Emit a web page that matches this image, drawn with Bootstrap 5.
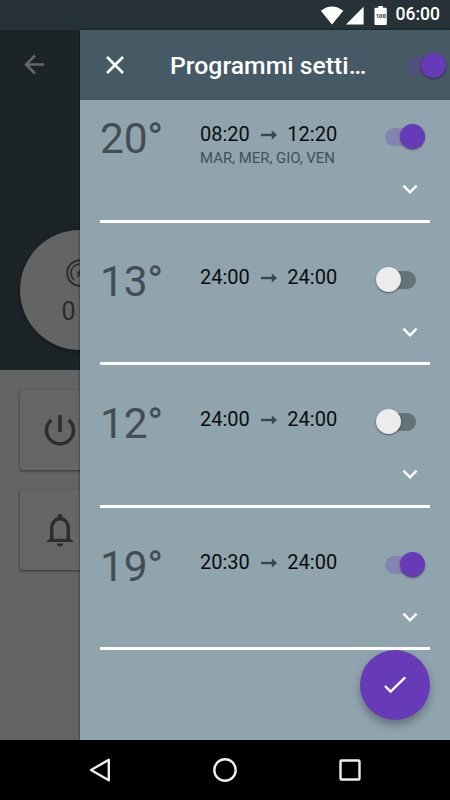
<!DOCTYPE html>
<html lang="it">
<head>
<meta charset="utf-8">
<meta name="viewport" content="width=device-width, initial-scale=1">
<title>Programmi settimanali</title>
<link href="https://cdn.jsdelivr.net/npm/bootstrap@5.3.0/dist/css/bootstrap.min.css" rel="stylesheet">
<style>
body{width:450px;height:800px;font-family:Roboto,sans-serif;line-height:1;background:#000}
svg{display:block;flex:none}
.status{height:30px;background:#263238;padding-right:10px;font-size:17.5px;font-weight:500}
.battery-wrap{margin:0 8px 0 9px}
.page-behind{width:80px;background:#646464;flex:none}
.hero{height:340px;background:#1d2428}
.back-icon{margin:23px 0 0 22px}
.dial{width:120px;height:120px;margin:153px 0 0 20px;background:#646464;box-shadow:0 2px 5px rgba(0,0,0,.3);color:#2b2b2b}
.dial-value{font-size:25px;line-height:30px;margin-left:41.5px;padding-top:1px}
.dial-unit{font-size:9px;color:#3f3f3f;vertical-align:2px}
.tile{width:120px;height:80px;margin:20px 0 0 20px;background:#666;border-radius:3px;box-shadow:0 1px 3px rgba(0,0,0,.5);padding-left:20px}
.drawer{background:#90a4ae;box-shadow:0 0 2px rgba(0,0,0,.7)}
.drawer-head{height:70px;background:#455a64;padding:0 4px 0 25px}
.drawer-title{font-size:24.8px;font-weight:500;margin-left:45px;width:200px;line-height:30px;padding-top:2px}
.programs{padding:0 20px;gap:20px}
.program{height:122.5px;border-bottom:3px solid #fff}
.program-main{height:84px}
.temp{width:100px;font-size:42.5px;line-height:50px;padding-top:14px;color:#424e54;letter-spacing:-.2px}
.hours{font-size:20px;line-height:24px;padding-top:22px;color:#0a0c0d}
.hours svg{margin:2px 10.5px 0 11px}
.days{font-size:15px;line-height:20px;margin-top:2px;color:#445057;letter-spacing:-.05px}
.toggle{width:40px;height:25px;flex:none}
.toggle::before{content:"";position:absolute;top:4px;width:30px;height:18px;border-radius:9px}
.toggle::after{content:"";position:absolute;top:0;width:25px;height:25px;border-radius:50%;box-shadow:0 1px 2px rgba(0,0,0,.45)}
.toggle.on::before{left:0;background:rgba(103,58,183,.3)}
.toggle.on::after{right:0;background:#673ab7}
.toggle.off::before{right:0;background:#647279}
.toggle.off::after{left:0;background:#ececec}
.program .toggle.on{margin:24px 5px 0 0}
.program .toggle.off{margin:24px 14px 0 0}
.expand{padding-right:12px}
.confirm{width:70px;height:70px;right:20px;bottom:20px;background:#673ab7;box-shadow:0 5px 9px rgba(0,0,0,.3)}
.confirm:hover{background:#5e35b1}
.sysnav{height:60px;padding:0 82px;background:#000}
.main-area{height:710px}
</style>
<script src="https://cdn.jsdelivr.net/npm/bootstrap@5.3.0/dist/js/bootstrap.bundle.min.js"></script>
</head>
<body class="m-0 overflow-hidden">
<header class="status d-flex align-items-center justify-content-end text-white">
  <svg width="45" height="19" viewBox="0 0 45 19" fill="#fff"><path d="M.8 4.8Q12-4 23.3 4.8L12 18.6z"/><path d="M26 18.6H43.6V.8z"/></svg>
  <div class="battery-wrap"><svg width="14" height="19" viewBox="0 0 14 19"><path d="M4.3 0h4.6v1.8h2.8q1.1 0 1.1 1.1V18q0 1-1.1 1H1.6Q.5 19 .5 18V2.9q0-1.1 1.1-1.1h2.7z" fill="#fff"/><text x="6.8" y="11.7" text-anchor="middle" font-family="Roboto" font-size="6" font-weight="700" fill="#263238">100</text></svg></div>
  <span>06:00</span>
</header>

<div class="main-area d-flex">
  <aside class="page-behind overflow-hidden">
    <div class="hero overflow-hidden">
      <svg class="back-icon" width="24" height="24" viewBox="0 0 24 24" fill="none" stroke="#666" stroke-width="2.5"><path d="M22 11.5H4M13 2.5l-9 9 9 9"/></svg>
      <div class="dial rounded-circle overflow-hidden">
        <svg width="120" height="66" viewBox="0 0 120 66" fill="none" stroke="#2b2b2b"><circle cx="60" cy="43" r="12.8" stroke-width="1.9"/><path d="M54.3 50a9 9 0 1 1 11.4 0" stroke-width="1.4"/><path d="M57 44l3-3 3 3M60 41.5l-2 5.500M60 42l2 5" stroke-width="1.5"/></svg>
        <div class="dial-value text-nowrap">0<span class="dial-unit">-</span></div>
      </div>
    </div>
    <div class="tile d-flex align-items-center">
      <svg width="40" height="40" viewBox="0 0 40 40" fill="none" stroke="#2d2d2d" stroke-width="3.5"><path d="M20 5v17M11.3 10a13.500 13.500 0 1 0 17.4 0"/></svg>
    </div>
    <div class="tile d-flex align-items-center">
      <svg width="40" height="40" viewBox="0 0 40 40" fill="#2d2d2d"><path d="M11.700 31V18a8.300 9.300 0 0 1 16.600 0V31" fill="none" stroke="#2d2d2d" stroke-width="3.400"/><path d="M17.500 9V6.500a2.500 2.500 0 0 1 5 0V9zM6.800 31.200l3.300-3V27h3.300v1.800h13.200V27h3.300v1.200l3.300 3v.8H6.800zM16.700 33.500h6.600q-.5 3-3.300 3t-3.300-3z"/></svg>
    </div>
  </aside>

  <main class="drawer position-relative flex-grow-1">
    <div class="drawer-head d-flex align-items-center text-white">
      <svg width="20" height="20" viewBox="0 0 20 20" fill="none" stroke="#fff" stroke-width="2.6"><path d="M2 2l16 16M18 2L2 18"/></svg>
      <div class="drawer-title text-nowrap">Programmi setti…</div>
      <span class="toggle on position-relative ms-auto"></span>
    </div>

    <div class="programs d-flex flex-column">
      <section class="program">
        <div class="program-main d-flex align-items-start">
          <div class="temp">20°</div>
          <div><div class="hours d-flex align-items-center">08:20<svg width="16" height="10" viewBox="0 0 16 10"><path d="M0 4h11V.8L15.800 5 11 9.200V6H0z" fill="#3c484e" stroke="#3c484e" stroke-width=".4"/></svg>12:20</div><div class="days text-nowrap">MAR, MER, GIO, VEN</div></div>
          <span class="toggle on position-relative ms-auto"></span>
        </div>
        <div class="expand d-flex justify-content-end"><svg width="16" height="10" viewBox="0 0 16 10" fill="none" stroke="#fff" stroke-width="2.4"><path d="M1.400 1.700L8 8.300l6.600-6.600"/></svg></div>
      </section>
      <section class="program">
        <div class="program-main d-flex align-items-start">
          <div class="temp">13°</div>
          <div class="hours d-flex align-items-center">24:00<svg width="16" height="10" viewBox="0 0 16 10"><path d="M0 4h11V.8L15.800 5 11 9.200V6H0z" fill="#3c484e" stroke="#3c484e" stroke-width=".4"/></svg>24:00</div>
          <span class="toggle off position-relative ms-auto"></span>
        </div>
        <div class="expand d-flex justify-content-end"><svg width="16" height="10" viewBox="0 0 16 10" fill="none" stroke="#fff" stroke-width="2.4"><path d="M1.400 1.700L8 8.300l6.600-6.600"/></svg></div>
      </section>
      <section class="program">
        <div class="program-main d-flex align-items-start">
          <div class="temp">12°</div>
          <div class="hours d-flex align-items-center">24:00<svg width="16" height="10" viewBox="0 0 16 10"><path d="M0 4h11V.8L15.800 5 11 9.200V6H0z" fill="#3c484e" stroke="#3c484e" stroke-width=".4"/></svg>24:00</div>
          <span class="toggle off position-relative ms-auto"></span>
        </div>
        <div class="expand d-flex justify-content-end"><svg width="16" height="10" viewBox="0 0 16 10" fill="none" stroke="#fff" stroke-width="2.4"><path d="M1.400 1.700L8 8.300l6.600-6.600"/></svg></div>
      </section>
      <section class="program">
        <div class="program-main d-flex align-items-start">
          <div class="temp">19°</div>
          <div class="hours d-flex align-items-center">20:30<svg width="16" height="10" viewBox="0 0 16 10"><path d="M0 4h11V.8L15.800 5 11 9.200V6H0z" fill="#3c484e" stroke="#3c484e" stroke-width=".4"/></svg>24:00</div>
          <span class="toggle on position-relative ms-auto"></span>
        </div>
        <div class="expand d-flex justify-content-end"><svg width="16" height="10" viewBox="0 0 16 10" fill="none" stroke="#fff" stroke-width="2.4"><path d="M1.400 1.700L8 8.300l6.600-6.600"/></svg></div>
      </section>
    </div>

    <button class="confirm btn border-0 rounded-circle position-absolute p-0 d-flex align-items-center justify-content-center" type="button" aria-label="Conferma">
      <svg width="24" height="20" viewBox="0 0 24 20" fill="none" stroke="#fff" stroke-width="2.4"><path d="M2 11l5.600 5.600L22.200 2.400"/></svg>
    </button>
  </main>
</div>

<nav class="sysnav d-flex align-items-center justify-content-between">
  <svg width="36" height="30" viewBox="0 0 36 30" fill="none" stroke="#eee" stroke-width="2.4" stroke-linejoin="round"><path d="M9 15L26.800 4.800v20.400z"/></svg>
  <svg width="30" height="30" viewBox="0 0 30 30" fill="none" stroke="#eee" stroke-width="2.4"><circle cx="15" cy="15" r="10.700"/></svg>
  <svg width="36" height="30" viewBox="0 0 36 30" fill="none" stroke="#eee" stroke-width="2.4"><rect x="8.500" y="5.500" width="19" height="19" rx="1"/></svg>
</nav>
</body>
</html>
